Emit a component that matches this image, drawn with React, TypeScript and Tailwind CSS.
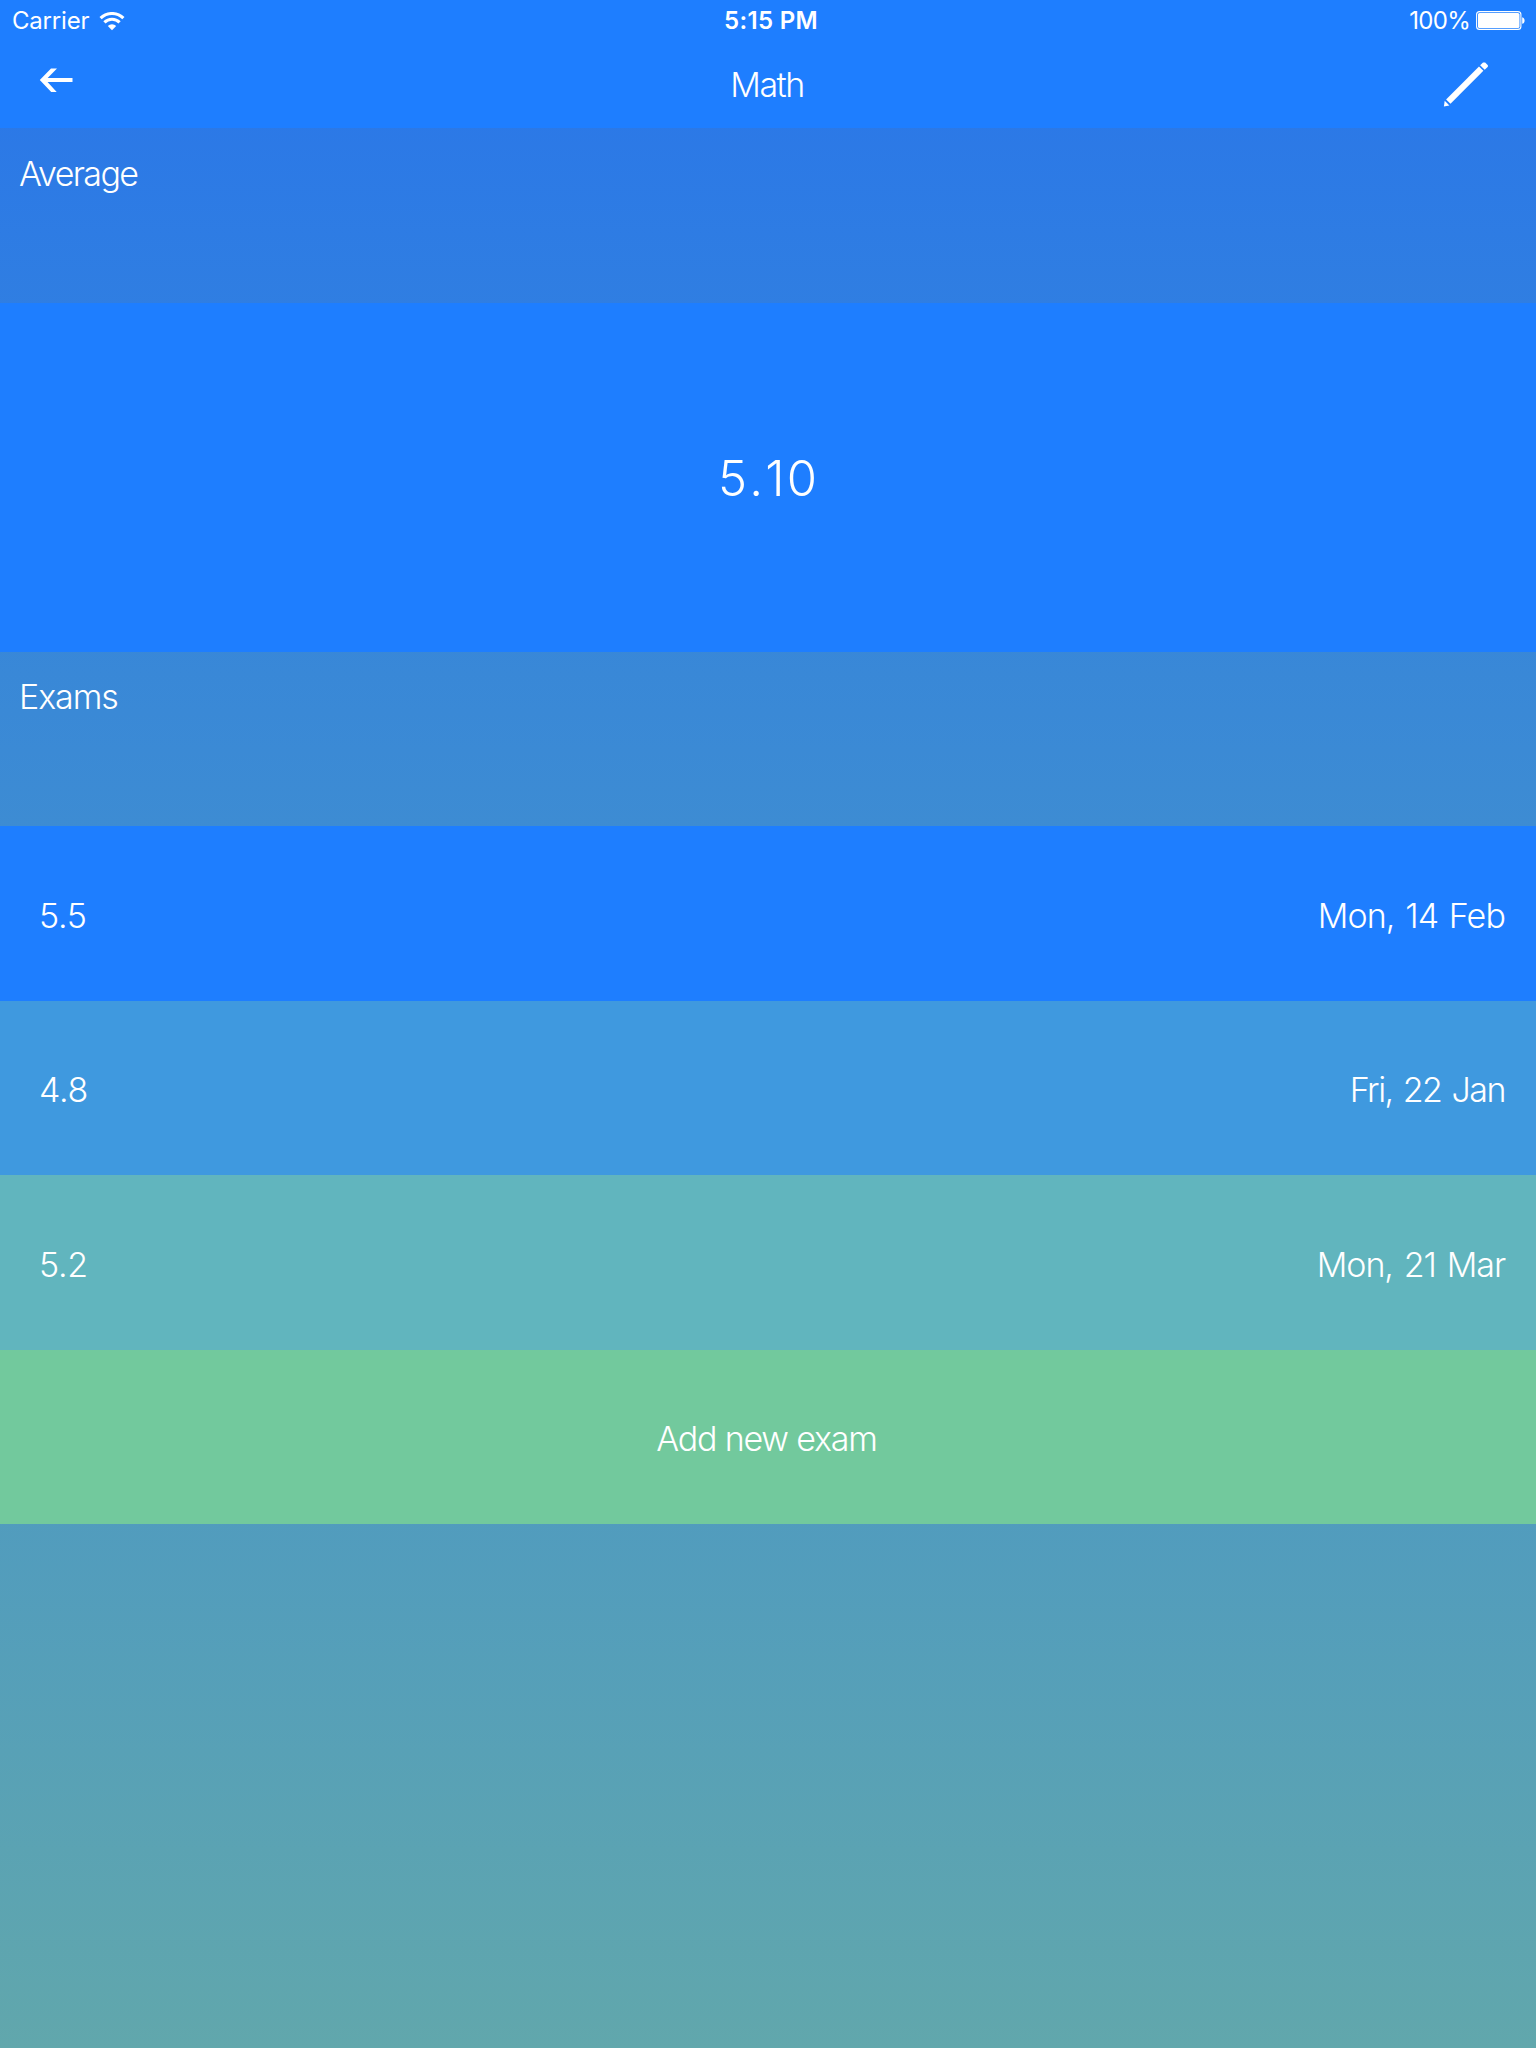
import React from "react";

type Exam = { grade: string; date: string; row: string; tracking: string };

const exams: Exam[] = [
  { grade: "5.5", date: "Mon, 14 Feb", row: "h-[175px] bg-[#1e7eff]", tracking: "tracking-[-0.9px] [word-spacing:2px]" },
  { grade: "4.8", date: "Fri, 22 Jan", row: "h-[174px] bg-[#3f99df]", tracking: "tracking-[-1.5px] [word-spacing:2px]" },
  { grade: "5.2", date: "Mon, 21 Mar", row: "h-[175px] bg-[#61b5be]", tracking: "tracking-[-1.1px] [word-spacing:2.5px]" },
];

function WifiIcon() {
  return (
    <svg className="ml-[10px] h-[19px] w-[26px]" viewBox="0 0 26 19" fill="none" stroke="white" strokeWidth="3.1">
      <path d="M1.6 6.2a16.2 16.2 0 0 1 22.8 0" />
      <path d="M5.4 10.4a10.8 10.8 0 0 1 15.2 0" />
      <path d="M13 18.2 8.8 14a6 6 0 0 1 8.4 0Z" fill="white" stroke="none" />
    </svg>
  );
}

function BatteryIcon() {
  return (
    <svg className="ml-[6px] h-[20px] w-[50px]" viewBox="0 0 50 20" fill="none">
      <rect x="0.6" y="0.6" width="44.3" height="17.8" rx="3" stroke="white" strokeWidth="1.1" />
      <rect x="2" y="2" width="41.5" height="15" rx="1.6" fill="white" />
      <path d="M46.2 6.2c3.2.6 3.2 6 0 6.6Z" fill="white" />
    </svg>
  );
}

export default function App() {
  return (
    <div className="flex h-[2048px] w-[1536px] flex-col overflow-hidden bg-linear-to-b from-[#2975ea] to-[#61a7ac] font-['Inter',sans-serif] text-[34px] leading-[40px] font-light text-white">
      <header className="h-[128px] bg-[#1e7eff]">
        <div className="grid h-[40px] grid-cols-3 items-center pt-[2px] text-[24px] leading-[38px] font-normal">
          <div className="flex items-center pl-[12px]">
            <span className="tracking-[-0.2px]">Carrier</span>
            <WifiIcon />
          </div>
          <div className="pl-[6px] text-center font-semibold tracking-[0.3px]">5:15 PM</div>
          <div className="flex items-center justify-end pr-[10px]">
            <span className="tracking-[-0.7px]">100%</span>
            <BatteryIcon />
          </div>
        </div>
        <div className="grid h-[88px] grid-cols-3">
          <button className="ml-[39px] mt-[27px] h-[26px] w-[34px]" aria-label="Back">
            <svg className="h-[26px] w-[34px]" viewBox="0 0 34 26" fill="none">
              <path d="M33.5 13H4" stroke="white" strokeWidth="4" />
              <path d="M0.8 13 12 1.4h6L6.7 13l11 12h-5.5Z" fill="white" />
            </svg>
          </button>
          <h1 className="pt-[25px] pr-[2px] text-center tracking-[-1.5px]">Math</h1>
          <button className="ml-auto mr-[46px] mt-[21px] h-[48px] w-[48px]" aria-label="Edit">
            <svg className="h-[48px] w-[48px]" viewBox="0 0 48 48" fill="white">
              <path d="m37 5.5 4.4 4.3L8.5 42.8 4.1 38.4Z" />
              <path d="m38.1 4.3 2.9-2.9h2.1l2.8 2.8v1.6l-3.2 3Z" />
              <path d="m2.7 39.8 4.7 4.6-5.5 1.2Z" />
            </svg>
          </button>
        </div>
      </header>
      <section className="h-[175px] pt-[26px] pl-[19px] tracking-[-1.6px]">Average</section>
      <section className="flex h-[349px] items-center justify-center bg-[#1e7eff] pt-[2px] pl-[1px] text-[49px] tracking-[2.2px] [font-kerning:none]">5.10</section>
      <section className="h-[174px] pt-[25px] pl-[19px] tracking-[-1.1px]">Exams</section>
      {exams.map((e) => (
        <div key={e.date} className={`flex items-center justify-between pt-[4px] pr-[31px] pl-[39px] ${e.row}`}>
          <span className="tracking-[-0.3px]">{e.grade}</span>
          <span className={e.tracking}>{e.date}</span>
        </div>
      ))}
      <button className="flex h-[174px] items-center justify-center bg-[#72c99d] pt-[3px] pr-[3px] tracking-[-1.2px]">Add new exam</button>
    </div>
  );
}
